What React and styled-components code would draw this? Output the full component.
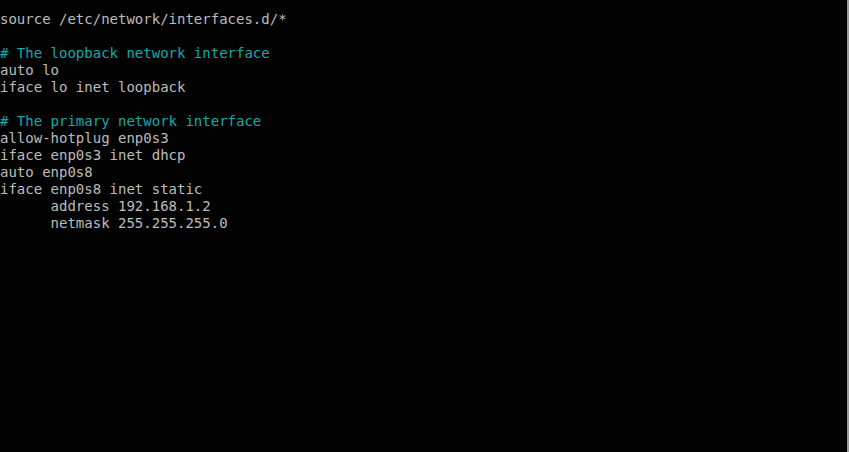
import React from "react";
import styled, { createGlobalStyle } from "styled-components";

const GlobalStyle = createGlobalStyle`
  html, body {
    margin: 0;
    padding: 0;
    background: #020202;
  }
`;

const lines = [
  { text: "source /etc/network/interfaces.d/*" },
  { text: "" },
  { text: "# The loopback network interface", comment: true },
  { text: "auto lo" },
  { text: "iface lo inet loopback" },
  { text: "" },
  { text: "# The primary network interface", comment: true },
  { text: "allow-hotplug enp0s3" },
  { text: "iface enp0s3 inet dhcp" },
  { text: "auto enp0s8" },
  { text: "iface enp0s8 inet static" },
  { text: "      address 192.168.1.2" },
  { text: "      netmask 255.255.255.0" },
];

class App extends React.Component {
  render() {
    return (
      <Screen>
        <GlobalStyle />
        <Console>
          {lines.map((l, i) => (
            <Line key={i} $comment={l.comment}>
              {l.text || " "}
            </Line>
          ))}
        </Console>
        <Edge />
      </Screen>
    );
  }
}

const Screen = styled.div`
  display: flex;
  width: 849px;
  height: 452px;
  background: #020202;
  overflow: hidden;
`;

const Console = styled.div`
  flex: 1;
  padding-top: 11px;
  font-family: "DejaVu Sans Mono", monospace;
  font-size: 14px;
  line-height: 17px;
  color: #bcbcbc;
`;

const Line = styled.div`
  white-space: pre;
  height: 17px;
  color: ${(p) => (p.$comment ? "#14a9a9" : "#bcbcbc")};
`;

const Edge = styled.div`
  width: 2px;
  background: #9a9a9a;
`;

export default App;
